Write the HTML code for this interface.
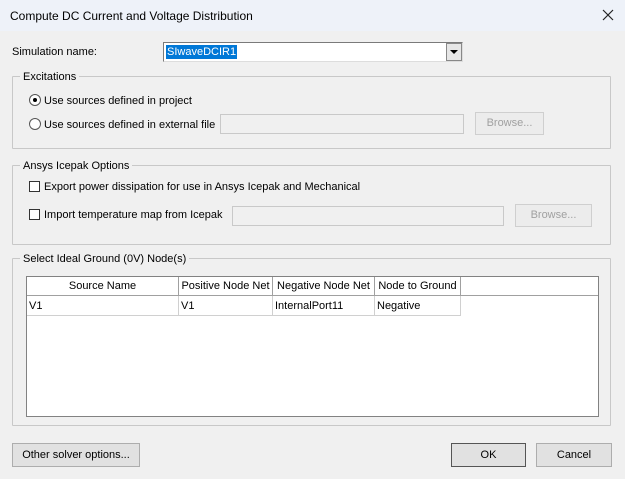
<!DOCTYPE html>
<html><head><style>
*{box-sizing:border-box;margin:0;padding:0}
body{width:625px;height:479px;background:#f0f0f0;font-family:"Liberation Sans",sans-serif;font-size:11px;color:#000;position:relative;overflow:hidden}
.a{position:absolute}
.t{position:absolute;white-space:nowrap;line-height:13px}
.grp{position:absolute;border:1px solid #c8c8c8;border-radius:1px}
.gl{position:absolute;background:#f0f0f0;padding:0 3px;line-height:13px}
.box{position:absolute;background:#f0f0f0;border:1px solid #c9c9c9}
.btn{position:absolute;background:#e1e1e1;border:1px solid #adadad;text-align:center;line-height:21px}
.dis{color:#a0a0a0;border-color:#cfcfcf;background:#ececec}
.cb{position:absolute;width:11px;height:11px;border:1px solid #333;background:#fff}
.rd{position:absolute;width:12px;height:12px;border:1px solid #555;border-radius:50%;background:#fff}
.th{position:absolute;top:0;height:19px;border-right:1px solid #a0a0a0;border-bottom:1px solid #a0a0a0;line-height:18px;text-align:center;background:#fff}
.td{position:absolute;top:19px;height:20px;border-right:1px solid #d0d0d0;border-bottom:1px solid #d0d0d0;line-height:20px;padding-left:2px}
</style></head><body>
<div class="a" style="left:0;top:0;width:625px;height:31px;background:#eef2f9"></div>
<div class="t" style="left:10px;top:10px;font-size:12px">Compute DC Current and Voltage Distribution</div>
<svg class="a" style="left:602px;top:9px" width="12" height="12"><path d="M1 1L11 11M11 1L1 11" stroke="#222" stroke-width="1.2"/></svg>

<div class="t" style="left:12px;top:46px">Simulation name:</div>
<div class="a" style="left:163px;top:42px;width:300px;height:20px;background:#fff;border:1px solid #7a7a7a;border-right-color:#ddd;border-bottom-color:#ddd"></div>
<div class="t" style="left:166px;top:45px;background:#0078d7;color:#fff;padding:0 1px;line-height:14px">SIwaveDCIR1</div>
<div class="a" style="left:446px;top:43px;width:16px;height:18px;background:#e6e6e6;border:1px solid #888"><svg width="14" height="16"><path d="M3 6h8l-4 4z" fill="#000"/></svg></div>

<div class="grp" style="left:12px;top:76px;width:599px;height:73px"></div>
<div class="gl" style="left:20px;top:71px">Excitations</div>
<div class="rd" style="left:29px;top:94px"><div class="a" style="left:3px;top:3px;width:4px;height:4px;background:#000;border-radius:50%"></div></div>
<div class="t" style="left:44px;top:95px">Use sources defined in project</div>
<div class="rd" style="left:29px;top:118px"></div>
<div class="t" style="left:44px;top:119px">Use sources defined in external file</div>
<div class="box" style="left:220px;top:114px;width:244px;height:20px"></div>
<div class="btn dis" style="left:475px;top:112px;width:69px;height:23px">Browse...</div>

<div class="grp" style="left:12px;top:165px;width:599px;height:80px"></div>
<div class="gl" style="left:20px;top:160px">Ansys Icepak Options</div>
<div class="cb" style="left:29px;top:181px"></div>
<div class="t" style="left:44px;top:181px">Export power dissipation for use in Ansys Icepak and Mechanical</div>
<div class="cb" style="left:29px;top:209px"></div>
<div class="t" style="left:44px;top:209px">Import temperature map from Icepak</div>
<div class="box" style="left:232px;top:206px;width:272px;height:20px"></div>
<div class="btn dis" style="left:515px;top:204px;width:77px;height:23px">Browse...</div>

<div class="grp" style="left:12px;top:258px;width:599px;height:168px"></div>
<div class="gl" style="left:20px;top:253px">Select Ideal Ground (0V) Node(s)</div>
<div class="a" style="left:26px;top:276px;width:573px;height:141px;background:#fff;border:1px solid #828282">
<div class="th" style="left:0;width:152px">Source Name</div>
<div class="th" style="left:152px;width:94px">Positive Node Net</div>
<div class="th" style="left:246px;width:102px">Negative Node Net</div>
<div class="th" style="left:348px;width:86px">Node to Ground</div>
<div class="th" style="left:434px;width:137px;border-right:none"></div>
<div class="td" style="left:0;width:152px">V1</div>
<div class="td" style="left:152px;width:94px">V1</div>
<div class="td" style="left:246px;width:102px">InternalPort11</div>
<div class="td" style="left:348px;width:86px">Negative</div>
</div>

<div class="btn" style="left:12px;top:443px;width:128px;height:24px;line-height:22px">Other solver options...</div>
<div class="btn" style="left:451px;top:443px;width:75px;height:24px;line-height:22px;border-color:#555">OK</div>
<div class="btn" style="left:536px;top:443px;width:76px;height:24px;line-height:22px">Cancel</div>
</body></html>
